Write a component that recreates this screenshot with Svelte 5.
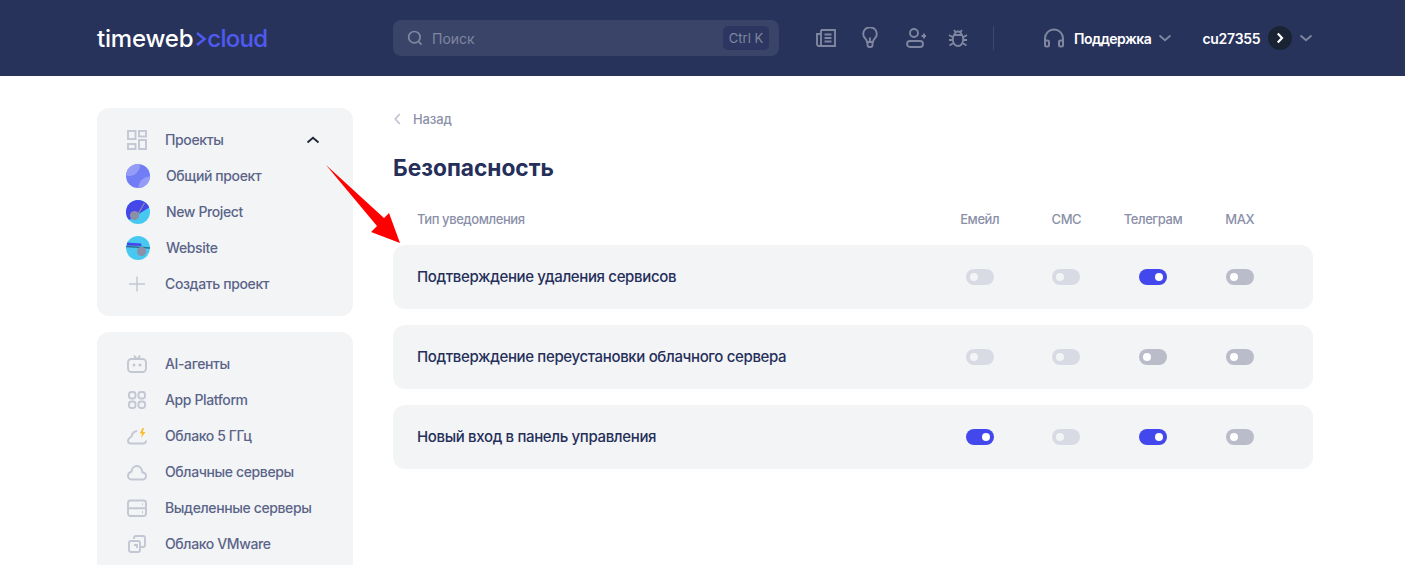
<script>
  const topProjects = [
    { name: 'Общий проект', kind: 'common' },
    { name: 'New Project', kind: 'new' },
    { name: 'Website', kind: 'site' }
  ];

  const services = [
    { name: 'AI-агенты', icon: 'bot' },
    { name: 'App Platform', icon: 'apps' },
    { name: 'Облако 5 ГГц', icon: 'bolt' },
    { name: 'Облачные серверы', icon: 'cloud' },
    { name: 'Выделенные серверы', icon: 'server' },
    { name: 'Облако VMware', icon: 'vmware' }
  ];

  const channels = ['Емейл', 'СМС', 'Телеграм', 'MAX'];

  // off = серый, dim = недоступно, on = включено
  const rows = [
    { title: 'Подтверждение удаления сервисов', states: ['dim', 'dim', 'on', 'off'] },
    { title: 'Подтверждение переустановки облачного сервера', states: ['dim', 'dim', 'off', 'off'] },
    { title: 'Новый вход в панель управления', states: ['on', 'dim', 'on', 'off'] }
  ];
</script>

<div class="page">
  <header class="topbar">
    <div class="logo">timeweb<svg class="logo-arrow" viewBox="0 0 12 16" width="12" height="16"><path d="M2 2l7.500 6L2 14" fill="none" stroke="#4f5bf0" stroke-width="2.600" /></svg><span>cloud</span></div>

    <div class="search">
      <svg class="search-icon" viewBox="0 0 16 16" width="16" height="16"><circle cx="7.400" cy="7.200" r="5.700" /><path d="M11.500 11.500l3 3.200" /></svg>
      <span class="search-text">Поиск</span>
      <span class="kbd">Ctrl K</span>
    </div>

    <div class="tools">
      <svg viewBox="0 0 20 20" width="20" height="20"><path d="M5 2h14v16H3a2 2 0 0 1-2-2V6h4M5 2v16" /><path d="M8.500 6.500h7M8.500 10h7M8.500 13.500h7" /></svg>
      <svg viewBox="0 0 20 22" width="20" height="22"><path d="M7 15c0-3-3.800-3.800-3.800-8a6.800 6.800 0 0 1 13.600 0c0 4.200-3.800 5-3.800 8zM7.500 15v3a2 2 0 0 0 2 2h1a2 2 0 0 0 2-2v-3M10 15v-4.500" /></svg>
      <svg viewBox="0 0 22 22" width="22" height="22"><circle cx="10" cy="6" r="4" /><rect x="3" y="14" width="16" height="6" rx="3" /><path d="M20 6.500v5M17.500 9h5" /></svg>
      <svg class="bug" viewBox="0 0 20 20" width="20" height="20"><path d="M6 7h8c.8 1 1.200 2.300 1.200 4.500 0 3.600-2.300 6.500-5.200 6.500s-5.200-2.900-5.200-6.500C4.800 9.300 5.200 8 6 7zM6.500 7a3.500 3.500 0 0 1 7 0M6 2l2 2.500M14 2l-2 2.500M1 7l3.800 2.200M19 7l-3.800 2.200M1 12h3.800M19 12h-3.800M1.500 17.500L5.500 15M18.500 17.500L14.500 15" /></svg>
    </div>

    <div class="divider"></div>

    <div class="support">
      <svg class="headset" viewBox="0 0 22 20" width="22" height="20"><path d="M2 14v-3.500a9 9 0 0 1 18 0V14" /><rect x="2" y="12.500" width="4" height="6" rx="1.500" /><rect x="16" y="12.500" width="4" height="6" rx="1.500" /></svg>
      <span class="strong">Поддержка</span>
      <svg class="chev" viewBox="0 0 14 8" width="14" height="8"><path d="M1.500 1.500L7 6.200l5.500-4.700" /></svg>
    </div>

    <div class="account">
      <span class="strong user">cu27355</span>
      <span class="badge"><svg viewBox="0 0 8 12" width="8" height="12"><path d="M1.800 1.500L6 6l-4.200 4.500" /></svg></span>
      <svg class="chev" viewBox="0 0 14 8" width="14" height="8"><path d="M1.500 1.500L7 6.200l5.500-4.700" /></svg>
    </div>
  </header>

  <div class="body">
    <aside class="side">
      <nav class="card">
        <div class="item">
          <svg class="ico" viewBox="0 0 20 20" width="20" height="20"><rect x="1" y="1" width="7.500" height="8" /><rect x="12" y="1" width="7" height="5.500" /><rect x="1" y="14" width="7.500" height="5" /><rect x="12" y="10" width="7" height="9" /></svg>
          <span>Проекты</span>
          <svg class="up" viewBox="0 0 14 8" width="14" height="8"><path d="M1.500 6.500L7 1.800l5.500 4.700" /></svg>
        </div>
        {#each topProjects as p, i}
          <div class="item project">
            <svg class="avatar" viewBox="0 0 24 24" width="24" height="24">
              <clipPath id="av{i}"><circle cx="12" cy="12" r="12" /></clipPath>
              <g clip-path="url(#av{i})">
                {#if p.kind === 'common'}
                  <rect width="24" height="24" fill="#717df5" />
                  <circle cx="3" cy="1" r="11" fill="#959cf7" />
                  <circle cx="24" cy="24" r="11.500" fill="#959cf7" />
                {:else if p.kind === 'new'}
                  <rect width="24" height="24" fill="#46c8f0" />
                  <path d="M0 0h24v7L3 20 0 17z" fill="#4547e8" />
                  <path d="M12 14L18.500 3" stroke="#8c8fa8" stroke-width="1.200" />
                  <circle cx="8.500" cy="15.500" r="4.600" fill="#8c8fa8" />
                {:else}
                  <rect width="24" height="24" fill="#46c8f0" />
                  <path d="M1 6.500L15 7.500l.5 2.500L1 9.500z" fill="#4547e8" />
                  <path d="M0 10.500l24 1.500" stroke="#2f6f92" stroke-width="1.300" />
                  <circle cx="15.500" cy="15.500" r="4.600" fill="#8c8fa8" />
                {/if}
              </g>
            </svg>
            <span>{p.name}</span>
          </div>
        {/each}
        <div class="item">
          <svg class="ico plus" viewBox="0 0 20 20" width="20" height="20"><path d="M10 2.500v15M2 10h16" /></svg>
          <span>Создать проект</span>
        </div>
      </nav>

      <nav class="card">
        {#each services as s}
          <div class="item">
            <svg class="ico" viewBox="0 0 20 20" width="20" height="20">
              {#if s.icon === 'bot'}
                <rect x="1" y="5" width="18" height="13" rx="3.500" />
                <path d="M7 1.500L9.500 5M13 1.500L10.500 5" />
                <circle cx="7" cy="11" r="1.500" class="solid" />
                <circle cx="13" cy="11" r="1.500" class="solid" />
              {:else if s.icon === 'apps'}
                <rect x="2" y="2" width="6.500" height="6.500" rx="2.500" />
                <rect x="11.500" y="2" width="6.500" height="6.500" rx="2.500" />
                <rect x="2" y="11.500" width="6.500" height="6.500" rx="2.500" />
                <rect x="11.500" y="11.500" width="6.500" height="6.500" rx="2.500" />
              {:else if s.icon === 'bolt'}
                <path d="M10 5C7 5.500 5 7.500 4.500 10.500 2.700 11.500 1 13 1 15c0 1.700 1.300 2.500 3 2.500h12c1.800 0 3-1 3.200-3" />
                <path d="M15.500 2l-2.800 5.500h2.300L14 12l4.500-6h-2.700l1.200-4z" class="yellow" />
              {:else if s.icon === 'cloud'}
                <path d="M5 17.500h10.500c2 0 3.500-1.500 3.500-3.500 0-2-1.500-3.500-3.500-3.500C15 7 12.800 4 9.800 4 7 4 4.800 6.500 4.500 9.500 2.500 10.200 1 12 1 14c0 2 1.800 3.500 4 3.500z" />
              {:else if s.icon === 'server'}
                <rect x="1" y="2.500" width="18" height="15.500" rx="2.500" />
                <path d="M1 10.200h18M15 6.300h1M15 14.200h1" />
              {:else}
                <path d="M7 5V4a2 2 0 0 1 2-2h7a2 2 0 0 1 2 2v7a2 2 0 0 1-2 2h-2" />
                <path d="M4 7h7a2 2 0 0 1 2 2v7a2 2 0 0 1-2 2H4a2 2 0 0 1-2-2V9a2 2 0 0 1 2-2z" />
                <path d="M7 11h3v3" />
              {/if}
            </svg>
            <span>{s.name}</span>
          </div>
        {/each}
      </nav>
    </aside>

    <main class="main">
      <div class="back">
        <svg viewBox="0 0 7 12" width="7" height="12"><path d="M5.800 1L1.300 6l4.500 5" /></svg>
        <span>Назад</span>
      </div>
      <h1>Безопасность</h1>

      <div class="grid head">
        <span class="type">Тип уведомления</span>
        {#each channels as c}
          <span class="cell">{c}</span>
        {/each}
      </div>

      <div class="rows">
        {#each rows as row}
          <div class="grid row">
            <span class="title">{row.title}</span>
            {#each row.states as st}
              <span class="cell"><span class="toggle {st}"><i></i></span></span>
            {/each}
          </div>
        {/each}
      </div>

      <!-- стрелка-аннотация поверх скриншота -->
      <svg class="arrow" viewBox="0 0 80 84" width="80" height="84">
        <path d="M0 0L58 53 63 48 74 78 45 67 51 61z" fill="#ff0000" />
      </svg>
    </main>
  </div>
</div>

<style>
  :global(body) {
    margin: 0;
    background: #fff;
  }

  .page {
    height: 100vh;
    overflow: hidden;
    font-family: Inter, 'Noto Sans', sans-serif;
    color: #5a6488;
  }

  svg {
    display: block;
    flex: none;
  }

  .topbar {
    height: 76px;
    background: #28335c;
    display: flex;
    align-items: center;
    padding-left: 97px;
    box-sizing: border-box;
  }

  .logo {
    width: 296px;
    display: flex;
    align-items: center;
    font-size: 24px;
    font-weight: 500;
    letter-spacing: -0.2px;
    color: #fff;
  }

  .logo span {
    color: #4f5bf0;
    letter-spacing: -0.7px;
  }

  .logo-arrow {
    margin: 2px 0 0 2px;
  }

  .search {
    width: 386px;
    height: 36px;
    box-sizing: border-box;
    background: #3a4468;
    border-radius: 8px;
    display: flex;
    align-items: center;
    padding: 0 10px 0 14px;
    color: #7f869f;
    font-size: 14px;
  }

  .search-icon {
    fill: none;
    stroke: #7f869f;
    stroke-width: 1.700;
  }

  .search-text {
    margin-left: 9px;
    flex: 1;
  }

  .kbd {
    background: #2c3660;
    border-radius: 5px;
    width: 46px;
    height: 24px;
    font-size: 13px;
    line-height: 24px;
    text-align: center;
  }

  .tools {
    display: flex;
    align-items: center;
    gap: 24px;
    margin-left: 37px;
  }

  .tools svg {
    fill: none;
    stroke: #7f869f;
    stroke-width: 1.900;
  }

  .tools .bug {
    margin-left: -2px;
  }

  .divider {
    width: 1px;
    height: 24px;
    background: #3e4869;
    margin-left: 25px;
  }

  .support {
    display: flex;
    align-items: center;
    margin-left: 49px;
  }

  .headset {
    fill: none;
    stroke: #7f869f;
    stroke-width: 2;
    margin-right: 9px;
  }

  .strong {
    color: #fff;
    font-size: 14px;
    font-weight: 600;
    letter-spacing: -0.5px;
  }

  .user {
    letter-spacing: -0.25px;
  }

  .chev {
    fill: none;
    stroke: #7f869f;
    stroke-width: 1.800;
    margin-left: 7px;
  }

  .account {
    display: flex;
    align-items: center;
    margin-left: 30px;
  }

  .badge {
    width: 24px;
    height: 24px;
    border-radius: 50%;
    background: #1a2333;
    margin-left: 8px;
    display: flex;
    align-items: center;
    justify-content: center;
  }

  .badge svg {
    fill: none;
    stroke: #fff;
    stroke-width: 2.200;
  }

  .body {
    display: flex;
    gap: 40px;
    padding: 32px 0 0 97px;
  }

  .side {
    width: 256px;
    flex: none;
    display: flex;
    flex-direction: column;
    gap: 16px;
  }

  .card {
    background: #f3f4f6;
    border-radius: 12px;
    padding: 14px 0;
  }

  .item {
    height: 36px;
    display: flex;
    align-items: center;
    padding-left: 30px;
    font-size: 14px;
    font-weight: 500;
    letter-spacing: -0.38px;
    color: #5a6488;
  }

  .item > span {
    margin-left: 18px;
    padding-bottom: 2px;
  }

  .project {
    padding-left: 29px;
  }

  .project > span {
    margin-left: 16px;
  }

  .ico {
    fill: none;
    stroke: #c3c7d3;
    stroke-width: 1.900;
  }

  .ico .solid {
    fill: #c3c7d3;
    stroke: none;
  }

  .ico .yellow {
    fill: #f5c02c;
    stroke: none;
  }

  .plus {
    stroke-width: 1.500;
  }

  .up {
    fill: none;
    stroke: #1e2433;
    stroke-width: 1.800;
    margin-left: auto;
    margin-right: 33px;
  }

  .main {
    width: 920px;
    position: relative;
  }

  .back {
    display: flex;
    align-items: center;
    gap: 12px;
    height: 22px;
    font-size: 13px;
    font-weight: 500;
    letter-spacing: -0.15px;
    color: #8a90a8;
  }

  .back svg {
    fill: none;
    stroke: #c3c7d3;
    stroke-width: 1.800;
    margin-left: 1px;
  }

  h1 {
    margin: 22px 0 0;
    font-size: 22.7px;
    line-height: 32px;
    font-weight: 700;
    color: #252f5a;
  }

  .grid {
    display: grid;
    grid-template-columns: 1fr repeat(4, 86.67px);
    align-items: center;
    padding: 0 30px 0 24px;
  }

  .head {
    margin-top: 19px;
    height: 32px;
    font-size: 13px;
    font-weight: 500;
    letter-spacing: -0.42px;
    color: #8a90a8;
  }

  .cell {
    display: flex;
    justify-content: center;
  }

  .rows {
    margin-top: 10px;
    display: flex;
    flex-direction: column;
    gap: 16px;
  }

  .row {
    height: 64px;
    background: #f3f4f6;
    border-radius: 12px;
  }

  .title {
    font-size: 15px;
    font-weight: 500;
    letter-spacing: -0.35px;
    padding-bottom: 2px;
    color: #252f5a;
  }

  .toggle {
    width: 28px;
    height: 16px;
    border-radius: 8px;
    display: flex;
    align-items: center;
    padding: 0 4px;
    box-sizing: border-box;
  }

  .toggle i {
    width: 8px;
    height: 8px;
    border-radius: 50%;
    background: #fff;
  }

  .toggle.dim {
    background: #d8dbe3;
  }

  .toggle.dim i {
    background: #f3f4f6;
  }

  .toggle.off {
    background: #babcc9;
  }

  .toggle.on {
    background: #4348ec;
    justify-content: flex-end;
  }

  .arrow {
    position: absolute;
    left: -67px;
    top: 57px;
  }
</style>
